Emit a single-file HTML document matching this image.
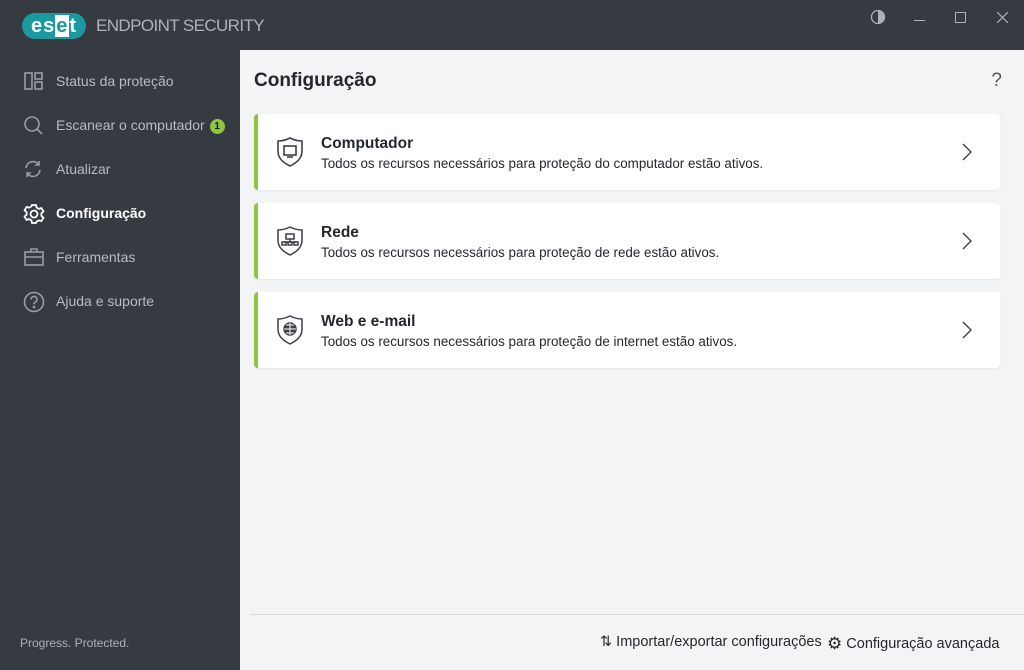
<!DOCTYPE html>
<html><head><meta charset="utf-8"><style>
*{margin:0;padding:0;box-sizing:border-box}
body{width:1024px;height:670px;background:#363a41;font-family:"Liberation Sans",sans-serif;position:relative;overflow:hidden}
.logo{position:absolute;left:22px;top:13px;width:64px;height:26px;background:#1a9aa0;border-radius:13px;color:#fff;font-weight:bold;font-size:20px;line-height:26px;text-align:center;letter-spacing:1px}
.logo span{background:#fff;color:#1a9aa0;padding:0 1px}
.title{position:absolute;left:96px;top:16px;color:#aeb1b6;font-size:17px;letter-spacing:-0.6px}
.nav{position:absolute;left:0;width:240px;height:44px;color:#b9bcc0;font-size:14px}
.nav svg{position:absolute;left:23px;top:12px}
.nav .t{position:absolute;left:56px;top:14px}
.nav.act{color:#fff;font-weight:bold}
.badge{display:inline-block;width:15px;height:15px;border-radius:50%;background:#8dc63f;color:#1c1c1c;font-size:10px;text-align:center;line-height:15px;font-weight:bold;margin-left:5px;vertical-align:1px}
.foot{position:absolute;left:20px;top:636px;color:#aeb1b6;font-size:12px}
.main{position:absolute;left:240px;top:50px;width:784px;height:620px;background:#f3f4f6}
h1{position:absolute;left:14px;top:20px;font-size:19px;font-weight:bold;color:#24282d}
.q{position:absolute;right:22px;top:20px;font-size:19px;color:#555}
.card{position:absolute;left:14px;width:746px;height:76px;background:#fff;border-left:4px solid #8dc63f;border-radius:4px;box-shadow:0 1px 2px rgba(0,0,0,.06)}
.card svg.ic{position:absolute;left:18px;top:22px}
.card .h{position:absolute;left:63px;top:21px;font-size:15.5px;font-weight:bold;color:#24282d}
.card .d{position:absolute;left:63px;top:42px;font-size:13.4px;color:#24282d}
.card .ch{position:absolute;right:28px;top:29px}
.sep{position:absolute;left:10px;right:0;top:564px;border-top:1px solid #d8d9db}
.bl{position:absolute;top:584px;font-size:14.5px;color:#24282d}
</style></head><body>
<div class="logo">es<span>e</span>t</div>
<div class="title">ENDPOINT SECURITY</div>
<svg style="position:absolute;left:870px;top:9px" width="16" height="16"><circle cx="8" cy="8" r="6.5" fill="none" stroke="#aeb1b6" stroke-width="1.3"/><path d="M8 1.5a6.5 6.5 0 0 1 0 13z" fill="#aeb1b6"/></svg>
<div style="position:absolute;left:914px;top:20px;width:11px;border-top:1px solid #aeb1b6"></div>
<div style="position:absolute;left:955px;top:12px;width:11px;height:11px;border:1px solid #aeb1b6"></div>
<svg style="position:absolute;left:997px;top:12px" width="11" height="11"><path d="M0 0L11 11M11 0L0 11" stroke="#aeb1b6" stroke-width="1.2"/></svg>

<div class="nav" style="top:59px"><svg width="20" height="20" fill="none" stroke="#9a9da2" stroke-width="1.6"><rect x="2" y="2" width="7" height="16"/><rect x="12" y="2" width="7" height="6"/><rect x="12" y="11" width="7" height="7"/></svg><span class="t">Status da proteção</span></div>
<div class="nav" style="top:103px"><svg width="20" height="20" fill="none" stroke="#9a9da2" stroke-width="1.6"><circle cx="9" cy="9" r="7"/><path d="M14 14l5 5"/></svg><span class="t">Escanear o computador<span class="badge">1</span></span></div>
<div class="nav" style="top:147px"><svg width="20" height="20" fill="none" stroke="#9a9da2" stroke-width="1.6"><path d="M3 9a7 7 0 0 1 13-3M17 11a7 7 0 0 1-13 3"/><path d="M16 2v4h-4M4 18v-4h4"/></svg><span class="t">Atualizar</span></div>
<div class="nav act" style="top:191px"><svg width="22" height="22" fill="none" stroke="#fff" stroke-width="1.8"><circle cx="11" cy="11" r="3.5"/><path d="M9 2h4l.6 2.6 2.3 1.3 2.5-.8 2 3.4-2 1.8v2.6l2 1.8-2 3.4-2.5-.8-2.3 1.3L13 20H9l-.6-2.6-2.3-1.3-2.5.8-2-3.4 2-1.8V9.1l-2-1.8 2-3.4 2.5.8 2.3-1.3z"/></svg><span class="t">Configuração</span></div>
<div class="nav" style="top:235px"><svg width="22" height="20" fill="none" stroke="#9a9da2" stroke-width="1.6"><rect x="2" y="5" width="18" height="13"/><path d="M8 5V2h6v3M2 10h18"/></svg><span class="t">Ferramentas</span></div>
<div class="nav" style="top:279px"><svg width="22" height="22" fill="none" stroke="#9a9da2" stroke-width="1.6"><circle cx="11" cy="11" r="9.5"/><path d="M8 8.5a3 3 0 1 1 4 2.8c-.8.4-1 1-1 2"/><circle cx="11" cy="16" r=".6" fill="#9a9da2"/></svg><span class="t">Ajuda e suporte</span></div>
<div class="foot">Progress. Protected.</div>

<div class="main">
<h1>Configuração</h1><div class="q">?</div>
<div class="card" style="top:64px"><svg class="ic" width="28" height="32" fill="none" stroke="#3c4148" stroke-width="1.6"><path d="M14 2C10 4 6 5 2 5v10c0 8 6 12 12 15 6-3 12-7 12-15V5c-4 0-8-1-12-3z"/><rect x="8" y="10" width="12" height="9"/><path d="M11 21h6"/></svg><div class="h">Computador</div><div class="d">Todos os recursos necessários para proteção do computador estão ativos.</div><svg class="ch" width="10" height="18"><path d="M1 1l8 8-8 8" fill="none" stroke="#3c4148" stroke-width="1.4"/></svg></div>
<div class="card" style="top:153px"><svg class="ic" width="28" height="32" fill="none" stroke="#3c4148" stroke-width="1.5"><path d="M14 2C10 4 6 5 2 5v10c0 8 6 12 12 15 6-3 12-7 12-15V5c-4 0-8-1-12-3z"/><rect x="10" y="9" width="8" height="5"/><path d="M14 14v3M8 17h12"/><rect x="6" y="17" width="4" height="3"/><rect x="12" y="17" width="4" height="3"/><rect x="18" y="17" width="4" height="3"/></svg><div class="h">Rede</div><div class="d">Todos os recursos necessários para proteção de rede estão ativos.</div><svg class="ch" width="10" height="18"><path d="M1 1l8 8-8 8" fill="none" stroke="#3c4148" stroke-width="1.4"/></svg></div>
<div class="card" style="top:242px"><svg class="ic" width="28" height="32" fill="none" stroke="#3c4148" stroke-width="1.5"><path d="M14 2C10 4 6 5 2 5v10c0 8 6 12 12 15 6-3 12-7 12-15V5c-4 0-8-1-12-3z"/><circle cx="14" cy="15" r="6" fill="#3c4148"/><path d="M8 15h12M14 9v12M10 11h8M10 19h8" stroke="#fff" stroke-width="1"/></svg><div class="h">Web e e-mail</div><div class="d">Todos os recursos necessários para proteção de internet estão ativos.</div><svg class="ch" width="10" height="18"><path d="M1 1l8 8-8 8" fill="none" stroke="#3c4148" stroke-width="1.4"/></svg></div>
<div class="sep"></div>
<div class="bl" style="left:360px">⇅ Importar/exportar configurações</div>
<div class="bl" style="left:587px"><span style="font-size:17px;vertical-align:-1px">⚙</span> Configuração avançada</div>
</div>
</body></html>
